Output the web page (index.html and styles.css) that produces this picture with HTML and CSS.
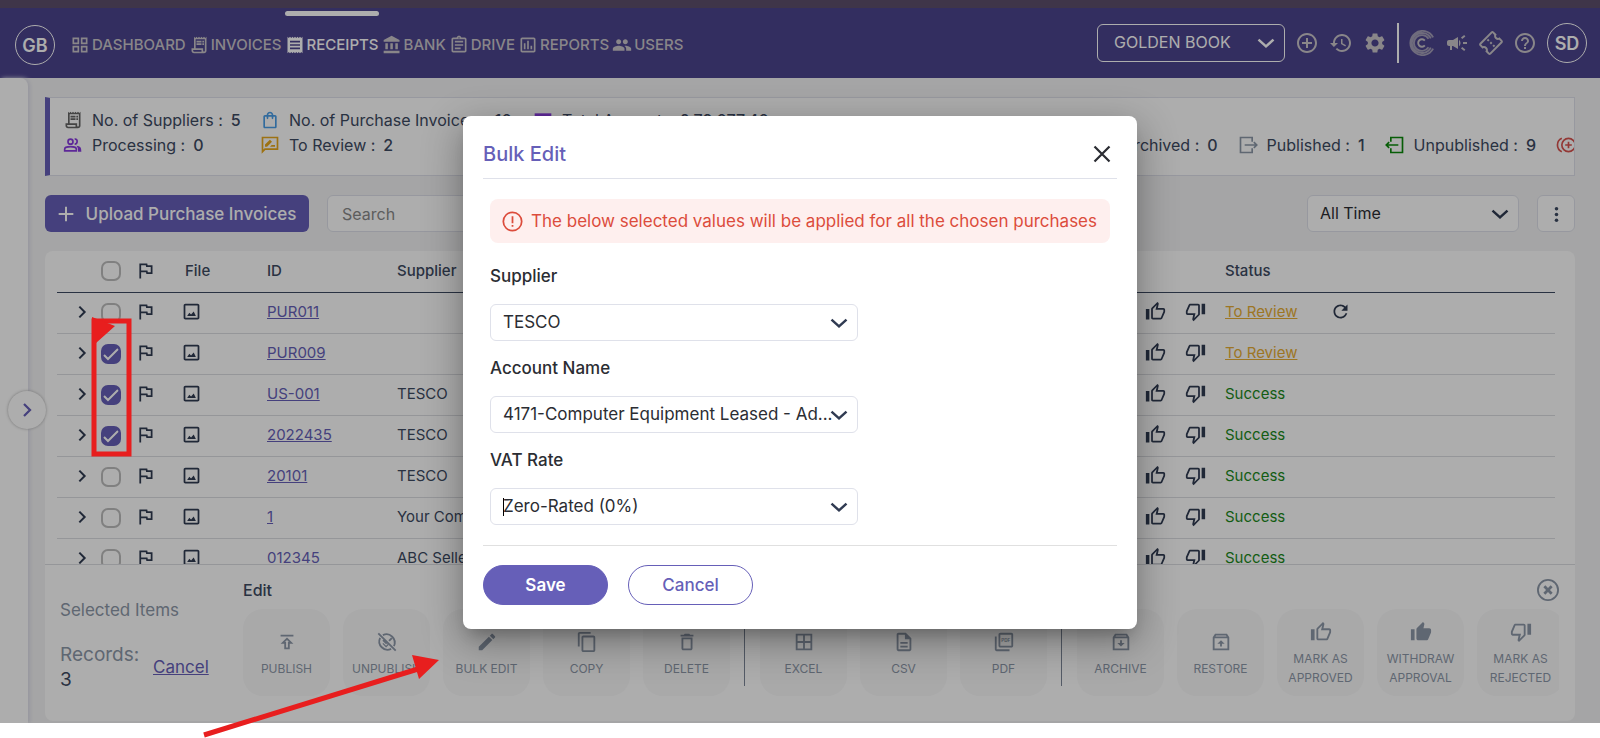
FILE: index.html
```html
<!DOCTYPE html>
<html lang="en">
<head>
    <meta charset="UTF-8">
    <meta name="viewport" content="width=device-width, initial-scale=1.0">
    <title>Receipts - Bulk Edit</title>
    <link rel="stylesheet" href="styles.css">
</head>
<body>
    <!-- Icon set -->
    <svg class="sprite" aria-hidden="true">
        <symbol id="grid" viewBox="0 0 24 24"><path d="M3 3v8h8V3H3zm6 6H5V5h4v4zm-6 4v8h8v-8H3zm6 6H5v-4h4v4zm4-16v8h8V3h-8zm6 6h-4V5h4v4zm-6 4v8h8v-8h-8zm6 6h-4v-4h4v4z"/></symbol>
        <symbol id="receipt-long" viewBox="0 0 24 24"><path d="M19.500 3.500 18 2l-1.500 1.500L15 2l-1.500 1.500L12 2l-1.500 1.500L9 2 7.500 3.500 6 2v14H3v3c0 1.660 1.340 3 3 3h12c1.660 0 3-1.340 3-3V2l-1.500 1.500zM15 20H6c-.55 0-1-.45-1-1v-1h10v2zm4-1c0 .55-.45 1-1 1s-1-.45-1-1v-3H8V5h11v14zM9 7h6v2H9zM16 7h2v2h-2zM9 10h6v2H9zM16 10h2v2h-2z"/></symbol>
        <symbol id="receipt" viewBox="0 0 24 24"><path d="M18 17H6v-2h12v2zm0-4H6v-2h12v2zm0-4H6V7h12v2zM3 22l1.500-1.500L6 22l1.500-1.500L9 22l1.500-1.500L12 22l1.500-1.500L15 22l1.500-1.500L18 22l1.500-1.500L21 22V2l-1.500 1.500L18 2l-1.500 1.500L15 2l-1.500 1.500L12 2l-1.500 1.500L9 2 7.500 3.500 6 2 4.500 3.500 3 2v20z"/></symbol>
        <symbol id="bank" viewBox="0 0 24 24"><path d="M4 10v7h3v-7H4zm6 0v7h3v-7h-3zM2 22h19v-3H2v3zm14-12v7h3v-7h-3zM11.500 1 2 6v2h19V6l-9.500-5z"/></symbol>
        <symbol id="drive" viewBox="0 0 24 24"><path d="M7 15h7v2H7zm0-4h10v2H7zm0-4h10v2H7zM19 3h-4.180C14.400 1.840 13.300 1 12 1s-2.400.84-2.820 2H5c-1.100 0-2 .9-2 2v14c0 1.100.9 2 2 2h14c1.100 0 2-.9 2-2V5c0-1.100-.9-2-2-2zm-7-.25c.41 0 .75.34.75.75s-.34.75-.75.75-.75-.34-.75-.75.34-.75.75-.75zM19 19H5V5h14v14z"/></symbol>
        <symbol id="reports" viewBox="0 0 24 24"><path d="M19 3H5c-1.100 0-2 .9-2 2v14c0 1.100.9 2 2 2h14c1.100 0 2-.9 2-2V5c0-1.100-.9-2-2-2zm0 16H5V5h14v14zM7 10h2v7H7zm4-3h2v10h-2zm4 6h2v4h-2z"/></symbol>
        <symbol id="users" viewBox="0 0 24 24"><path d="M16 11c1.660 0 3-1.340 3-3s-1.340-3-3-3-3 1.340-3 3 1.340 3 3 3zm-8 0c1.660 0 3-1.340 3-3S9.660 5 8 5 5 6.340 5 8s1.340 3 3 3zm0 2c-2.330 0-7 1.170-7 3.500V19h14v-2.500c0-2.330-4.670-3.500-7-3.500zm8 0c-.29 0-.62.02-.97.05 1.160.84 1.970 1.970 1.970 3.450V19h6v-2.500c0-2.330-4.670-3.500-7-3.500z"/></symbol>
        <symbol id="add-circle" viewBox="0 0 24 24"><path d="M13 7h-2v4H7v2h4v4h2v-4h4v-2h-4V7zm-1-5C6.480 2 2 6.480 2 12s4.480 10 10 10 10-4.480 10-10S17.520 2 12 2zm0 18c-4.410 0-8-3.590-8-8s3.590-8 8-8 8 3.590 8 8-3.590 8-8 8z"/></symbol>
        <symbol id="history" viewBox="0 0 24 24"><path d="M13 3c-4.970 0-9 4.030-9 9H1l3.890 3.890.07.14L9 12H6c0-3.870 3.130-7 7-7s7 3.130 7 7-3.130 7-7 7c-1.930 0-3.680-.79-4.940-2.060l-1.420 1.420C8.270 19.990 10.510 21 13 21c4.970 0 9-4.030 9-9s-4.030-9-9-9zm-1 5v5l4.280 2.540.72-1.210-3.500-2.080V8H12z"/></symbol>
        <symbol id="settings" viewBox="0 0 24 24"><path d="M19.140 12.940c.04-.3.06-.61.06-.94 0-.32-.02-.64-.07-.94l2.030-1.580c.18-.14.23-.41.12-.61l-1.920-3.320c-.12-.22-.37-.29-.59-.22l-2.390.96c-.5-.38-1.030-.7-1.620-.94l-.36-2.540c-.04-.24-.24-.41-.48-.41h-3.840c-.24 0-.43.17-.47.41l-.36 2.540c-.59.24-1.130.57-1.620.94l-2.390-.96c-.22-.08-.47 0-.59.22L2.740 8.870c-.12.21-.08.47.12.61l2.030 1.580c-.05.3-.09.63-.09.94s.02.64.07.94l-2.030 1.580c-.18.14-.23.41-.12.61l1.920 3.320c.12.22.37.29.59.22l2.390-.96c.5.38 1.030.7 1.620.94l.36 2.540c.05.24.24.41.48.41h3.840c.24 0 .44-.17.47-.41l.36-2.540c.59-.24 1.130-.56 1.620-.94l2.390.96c.22.08.47 0 .59-.22l1.920-3.320c.12-.22.07-.47-.12-.61l-2.010-1.580zM12 15.600c-1.980 0-3.600-1.620-3.600-3.600s1.620-3.600 3.600-3.600 3.600 1.620 3.600 3.600-1.620 3.600-3.600 3.600z"/></symbol>
        <symbol id="campaign" viewBox="0 0 24 24"><path d="M18 11v2h4v-2h-4zM16 17.610c.96.71 2.210 1.650 3.200 2.390.4-.53.8-1.070 1.200-1.600-.99-.74-2.240-1.680-3.200-2.400-.4.54-.8 1.080-1.200 1.610zM20.400 5.600c-.4-.53-.8-1.070-1.200-1.600-.99.74-2.240 1.680-3.200 2.400.4.53.8 1.070 1.200 1.600.96-.72 2.210-1.650 3.200-2.400zM4 9c-1.100 0-2 .9-2 2v2c0 1.100.9 2 2 2h1v4h2v-4h1l5 3V6L8 9H4zm11.500 3c0-1.330-.58-2.530-1.500-3.350v6.690c.92-.81 1.500-2.010 1.500-3.340z"/></symbol>
        <symbol id="ticket" viewBox="0 0 24 24"><path transform="rotate(-45 12 12)" d="M22 10V6c0-1.110-.9-2-2-2H4c-1.100 0-1.990.89-1.990 2v4c1.100 0 1.990.9 1.990 2s-.89 2-2 2v4c0 1.100.9 2 2 2h16c1.100 0 2-.9 2-2v-4c-1.100 0-2-.9-2-2s.9-2 2-2zm-2-1.460c-1.190.69-2 1.990-2 3.460s.81 2.770 2 3.460V18H4v-2.540c1.190-.69 2-1.990 2-3.460 0-1.480-.8-2.770-1.990-3.460L4 6h16v2.540zM11 15h2v2h-2zm0-4h2v2h-2zm0-4h2v2h-2z"/></symbol>
        <symbol id="help" viewBox="0 0 24 24"><path d="M11 18h2v-2h-2v2zm1-16C6.480 2 2 6.480 2 12s4.480 10 10 10 10-4.480 10-10S17.520 2 12 2zm0 18c-4.410 0-8-3.590-8-8s3.590-8 8-8 8 3.590 8 8-3.590 8-8 8zm0-14c-2.210 0-4 1.790-4 4h2c0-1.100.9-2 2-2s2 .9 2 2c0 2-3 1.750-3 5h2c0-2.250 3-2.500 3-5 0-2.210-1.790-4-4-4z"/></symbol>
        <symbol id="down" viewBox="0 0 24 24"><path class="line wide" d="M3 8l9 8 9-8"/></symbol>
        <symbol id="right" viewBox="0 0 24 24"><path class="line wide" d="M8 4l8 8-8 8"/></symbol>
        <symbol id="bag" viewBox="0 0 24 24"><path d="M18 6h-2c0-2.210-1.790-4-4-4S8 3.790 8 6H6c-1.100 0-2 .9-2 2v12c0 1.100.9 2 2 2h12c1.100 0 2-.9 2-2V8c0-1.100-.9-2-2-2zm-6-2c1.100 0 2 .9 2 2h-4c0-1.100.9-2 2-2zm6 16H6V8h2v2c0 .55.45 1 1 1s1-.45 1-1V8h4v2c0 .55.45 1 1 1s1-.45 1-1V8h2v12z"/></symbol>
        <symbol id="card" viewBox="0 0 24 24"><path d="M2 4h20v16H2z"/></symbol>
        <symbol id="people" viewBox="0 0 24 24"><circle class="line" cx="9" cy="8" r="3"/><path class="line" d="M2 19v-2c0-4 14-4 14 0v2zM14 5c4-1 4 6 0 6"/><path d="M16 13c5 .5 6 2 6 7h-4c0-3 0-5-2-7z"/></symbol>
        <symbol id="review" viewBox="0 0 24 24"><path class="line" d="M3 3h18v14H6l-3 3z"/><path d="M6 14v-2.500l5.900-5.900 2.500 2.500L8.500 14zM12 14l2-2h4v2z"/></symbol>
        <symbol id="export" viewBox="0 0 24 24"><path class="line" d="M17 8V3H3v18h14v-5M8 12h14M19 8.500l3.500 3.500-3.500 3.500"/></symbol>
        <symbol id="import" viewBox="0 0 24 24"><path class="line" d="M7 8V3h14v18H7v-5M16 12H2M5 8.500L1.500 12 5 15.500"/></symbol>
        <symbol id="duplicate" viewBox="0 0 24 24"><circle class="line" cx="15" cy="12" r="8"/><path class="line" d="M15 8v8M11 12h8M7 4c-7 3-7 13 0 16"/></symbol>
        <symbol id="plus" viewBox="0 0 24 24"><path class="line wide" d="M12 1v22M1 12h22"/></symbol>
        <symbol id="dots" viewBox="0 0 24 24"><circle cx="12" cy="4" r="2.500"/><circle cx="12" cy="12" r="2.500"/><circle cx="12" cy="20" r="2.500"/></symbol>
        <symbol id="flag" viewBox="0 0 24 24"><path d="M12.360 6l.4 2H18v6h-3.360l-.4-2H7V6h5.360M14 4H5v17h2v-7h5.600l.4 2h7V6h-5.600L14 4z"/></symbol>
        <symbol id="image" viewBox="0 0 24 24"><path d="M19 5v14H5V5h14m0-2H5c-1.100 0-2 .9-2 2v14c0 1.100.9 2 2 2h14c1.100 0 2-.9 2-2V5c0-1.100-.9-2-2-2zM7 17l2.500-3.500 2 2 3-3.500 2.500 5z"/></symbol>
        <symbol id="thumb-up" viewBox="0 0 24 24"><path d="M9 21h9c.83 0 1.540-.5 1.840-1.220l3.020-7.050c.09-.23.14-.47.14-.73v-2c0-1.100-.9-2-2-2h-6.310l.95-4.570.03-.32c0-.41-.17-.79-.44-1.060L14.170 1 7.580 7.590C7.220 7.950 7 8.450 7 9v10c0 1.100.9 2 2 2zM9 9l4.340-4.340L12 10h9v2l-3 7H9V9zM1 9h4v12H1z"/></symbol>
        <symbol id="thumb-full" viewBox="0 0 24 24"><path d="M1 21h4V9H1v12zm22-11c0-1.100-.9-2-2-2h-6.310l.95-4.570.03-.32c0-.41-.17-.79-.44-1.060L14.170 1 7.590 7.590C7.220 7.950 7 8.450 7 9v10c0 1.100.9 2 2 2h9c.83 0 1.540-.5 1.840-1.220l3.020-7.050c.09-.23.14-.47.14-.73v-2z"/></symbol>
        <symbol id="thumb-down" viewBox="0 0 24 24"><path transform="rotate(180 12 12)" d="M9 21h9c.83 0 1.540-.5 1.840-1.220l3.020-7.050c.09-.23.14-.47.14-.73v-2c0-1.100-.9-2-2-2h-6.310l.95-4.570.03-.32c0-.41-.17-.79-.44-1.060L14.170 1 7.580 7.590C7.220 7.950 7 8.450 7 9v10c0 1.100.9 2 2 2zM9 9l4.340-4.340L12 10h9v2l-3 7H9V9zM1 9h4v12H1z"/></symbol>
        <symbol id="refresh" viewBox="0 0 24 24"><path d="M17.650 6.350C16.200 4.900 14.210 4 12 4c-4.420 0-7.990 3.580-7.990 8s3.570 8 7.990 8c3.730 0 6.840-2.550 7.730-6h-2.080c-.82 2.330-3.040 4-5.650 4-3.310 0-6-2.690-6-6s2.690-6 6-6c1.660 0 3.140.69 4.220 1.780L13 11h7V4l-2.350 2.350z"/></symbol>
        <symbol id="publish" viewBox="0 0 24 24"><path d="M5 4h14v2H5zM5 14h4v6h6v-6h4l-7-7-7 7zm8-2v6h-2v-6H9.830L12 9.830 14.170 12H13z"/></symbol>
        <symbol id="unpublish" viewBox="0 0 24 24"><path class="line" d="M7.500 4.500a9 9 0 0 1 12 12M16.500 19.500a9 9 0 0 1-12-12M2.500 2.500l19 19"/><path d="M7 10.500l4 4 1.500-1.500-4-4zM13.500 10l3-3L18 8.500l-3 3zM11 16l2-2 1 1-3 3-4-4 1-1z"/></symbol>
        <symbol id="edit" viewBox="0 0 24 24"><path d="M3 17.250V21h3.750L17.810 9.940l-3.750-3.750L3 17.250zM20.710 7.040c.39-.39.39-1.020 0-1.410l-2.340-2.340c-.39-.39-1.020-.39-1.410 0l-1.830 1.830 3.750 3.750 1.830-1.830z"/></symbol>
        <symbol id="copy" viewBox="0 0 24 24"><path d="M16 1H4c-1.100 0-2 .9-2 2v14h2V3h12V1zm3 4H8c-1.100 0-2 .9-2 2v14c0 1.100.9 2 2 2h11c1.100 0 2-.9 2-2V7c0-1.100-.9-2-2-2zm0 16H8V7h11v14z"/></symbol>
        <symbol id="delete" viewBox="0 0 24 24"><path d="M6 19c0 1.100.9 2 2 2h8c1.100 0 2-.9 2-2V7H6v12zM8 9h8v10H8V9zm7.500-5l-1-1h-5l-1 1H5v2h14V4z"/></symbol>
        <symbol id="excel" viewBox="0 0 24 24"><path d="M3 3v18h18V3H3zm8 16H5v-6h6v6zm0-8H5V5h6v6zm8 8h-6v-6h6v6zm0-8h-6V5h6v6z"/></symbol>
        <symbol id="csv" viewBox="0 0 24 24"><path d="M8 16h8v2H8zm0-4h8v2H8zm6-10H6c-1.100 0-2 .9-2 2v16c0 1.100.89 2 1.990 2H18c1.100 0 2-.9 2-2V8l-6-6zm4 18H6V4h7v5h5v11z"/></symbol>
        <symbol id="pdf" viewBox="0 0 24 24"><path d="M20 2H8c-1.100 0-2 .9-2 2v12c0 1.100.9 2 2 2h12c1.100 0 2-.9 2-2V4c0-1.100-.9-2-2-2zm0 14H8V4h12v12zM4 6H2v14c0 1.100.9 2 2 2h14v-2H4V6z"/><text class="icon-text" x="14" y="12" text-anchor="middle">PDF</text></symbol>
        <symbol id="archive" viewBox="0 0 24 24"><path class="line" d="M4 7l2-3h12l2 3v13H4zM4 7h16"/><path d="M11 10h2v3h3l-4 4-4-4h3z"/></symbol>
        <symbol id="restore" viewBox="0 0 24 24"><path class="line" d="M4 7l2-3h12l2 3v13H4zM4 7h16"/><path d="M11 17h2v-3h3l-4-4-4 4h3z"/></symbol>
        <symbol id="close" viewBox="0 0 24 24"><path class="line wide" d="M2 2l20 20M22 2L2 22"/></symbol>
        <symbol id="close-circle" viewBox="0 0 24 24"><circle class="line" cx="12" cy="12" r="11"/><path class="line wide" d="M8 8l8 8M16 8l-8 8"/></symbol>
        <symbol id="alert" viewBox="0 0 24 24"><circle class="line" cx="12" cy="12" r="10.500"/><path class="line" d="M12 6v8M12 16v2"/></symbol>
        <symbol id="rings" viewBox="0 0 28 28"><path class="line thin" d="M26 8a13 13 0 1 0 0 12M23.500 9a10.800 10.800 0 1 0 0 10M21 9.500a8.500 8.500 0 1 0 0 9"/><path class="line" d="M17 11.500a4 4 0 1 0 0 5"/></symbol>
    </svg>

    <div class="app">
        <header class="header">
            <a href="#" class="avatar logo">GB</a>
            <nav class="nav">
                <a href="#"><svg><use href="#grid"/></svg>DASHBOARD</a>
                <a href="#"><svg><use href="#receipt-long"/></svg>INVOICES</a>
                <a href="#" class="active"><svg><use href="#receipt"/></svg>RECEIPTS</a>
                <a href="#"><svg><use href="#bank"/></svg>BANK</a>
                <a href="#"><svg><use href="#drive"/></svg>DRIVE</a>
                <a href="#"><svg><use href="#reports"/></svg>REPORTS</a>
                <a href="#"><svg><use href="#users"/></svg>USERS</a>
            </nav>
            <div class="header-tools">
                <div class="select company">
                    <select aria-label="Company"><option>GOLDEN BOOK</option></select>
                    <svg><use href="#down"/></svg>
                </div>
                <button class="tool" aria-label="Add"><svg><use href="#add-circle"/></svg></button>
                <button class="tool" aria-label="History"><svg><use href="#history"/></svg></button>
                <button class="tool" aria-label="Settings"><svg><use href="#settings"/></svg></button>
                <span class="header-line"></span>
                <button class="tool rings" aria-label="Credits"><svg><use href="#rings"/></svg></button>
                <button class="tool" aria-label="News"><svg><use href="#campaign"/></svg></button>
                <button class="tool" aria-label="Tickets"><svg><use href="#ticket"/></svg></button>
                <button class="tool" aria-label="Help"><svg><use href="#help"/></svg></button>
                <button class="avatar">SD</button>
            </div>
        </header>

        <div class="body">
            <aside class="sidebar">
                <button class="toggle" aria-label="Open sidebar"><svg><use href="#right"/></svg></button>
            </aside>

            <main class="main">
                <section class="summary">
                    <div class="summary-row">
                        <span class="stat first"><svg class="gray"><use href="#receipt-long"/></svg>No. of Suppliers : <b>5</b></span>
                        <span class="stat second"><svg class="blue"><use href="#bag"/></svg>No. of Purchase Invoices : <b>10</b></span>
                        <span class="stat"><svg class="purple"><use href="#card"/></svg>Total Amount : <b>£ 79,077.40</b></span>
                    </div>
                    <div class="summary-row">
                        <span class="stat first"><svg class="purple"><use href="#people"/></svg>Processing : <b>0</b></span>
                        <span class="stat second"><svg class="yellow"><use href="#review"/></svg>To Review : <b>2</b></span>
                        <div class="stats-end">
                            <span class="stat">Archived : <b>0</b></span>
                            <span class="stat"><svg class="slate"><use href="#export"/></svg>Published : <b>1</b></span>
                            <span class="stat"><svg class="green"><use href="#import"/></svg>Unpublished : <b>9</b></span>
                            <svg class="red"><use href="#duplicate"/></svg>
                        </div>
                    </div>
                </section>

                <div class="toolbar">
                    <button class="upload"><svg><use href="#plus"/></svg>Upload Purchase Invoices</button>
                    <input class="search" type="text" placeholder="Search" aria-label="Search">
                    <div class="select period">
                        <select aria-label="Period"><option>All Time</option></select>
                        <svg><use href="#down"/></svg>
                    </div>
                    <button class="more" aria-label="More"><svg><use href="#dots"/></svg></button>
                </div>

                <section class="card">
                    <div class="table-wrap">
                        <table>
                            <thead>
                                <tr>
                                    <th class="c-open"></th>
                                    <th class="c-check"><input type="checkbox" aria-label="Select all"></th>
                                    <th class="c-flag"><svg><use href="#flag"/></svg></th>
                                    <th class="c-file">File</th>
                                    <th class="c-id">ID</th>
                                    <th>Supplier</th>
                                    <th class="c-thumb"></th>
                                    <th class="c-thumb"></th>
                                    <th class="c-status">Status</th>
                                    <th class="c-retry"></th>
                                </tr>
                            </thead>
                            <tbody>
                                <tr>
                                    <td><svg class="open"><use href="#right"/></svg></td>
                                    <td><input type="checkbox" aria-label="PUR011"></td>
                                    <td><svg><use href="#flag"/></svg></td>
                                    <td><svg><use href="#image"/></svg></td>
                                    <td><a href="#">PUR011</a></td>
                                    <td></td>
                                    <td><svg><use href="#thumb-up"/></svg></td>
                                    <td><svg><use href="#thumb-down"/></svg></td>
                                    <td><a href="#" class="review">To Review</a></td>
                                    <td><svg><use href="#refresh"/></svg></td>
                                </tr>
                                <tr>
                                    <td><svg class="open"><use href="#right"/></svg></td>
                                    <td><input type="checkbox" aria-label="PUR009" checked></td>
                                    <td><svg><use href="#flag"/></svg></td>
                                    <td><svg><use href="#image"/></svg></td>
                                    <td><a href="#">PUR009</a></td>
                                    <td></td>
                                    <td><svg><use href="#thumb-up"/></svg></td>
                                    <td><svg><use href="#thumb-down"/></svg></td>
                                    <td><a href="#" class="review">To Review</a></td>
                                    <td></td>
                                </tr>
                                <tr>
                                    <td><svg class="open"><use href="#right"/></svg></td>
                                    <td><input type="checkbox" aria-label="US-001" checked></td>
                                    <td><svg><use href="#flag"/></svg></td>
                                    <td><svg><use href="#image"/></svg></td>
                                    <td><a href="#">US-001</a></td>
                                    <td>TESCO</td>
                                    <td><svg><use href="#thumb-up"/></svg></td>
                                    <td><svg><use href="#thumb-down"/></svg></td>
                                    <td class="success">Success</td>
                                    <td></td>
                                </tr>
                                <tr>
                                    <td><svg class="open"><use href="#right"/></svg></td>
                                    <td><input type="checkbox" aria-label="2022435" checked></td>
                                    <td><svg><use href="#flag"/></svg></td>
                                    <td><svg><use href="#image"/></svg></td>
                                    <td><a href="#">2022435</a></td>
                                    <td>TESCO</td>
                                    <td><svg><use href="#thumb-up"/></svg></td>
                                    <td><svg><use href="#thumb-down"/></svg></td>
                                    <td class="success">Success</td>
                                    <td></td>
                                </tr>
                                <tr>
                                    <td><svg class="open"><use href="#right"/></svg></td>
                                    <td><input type="checkbox" aria-label="20101"></td>
                                    <td><svg><use href="#flag"/></svg></td>
                                    <td><svg><use href="#image"/></svg></td>
                                    <td><a href="#">20101</a></td>
                                    <td>TESCO</td>
                                    <td><svg><use href="#thumb-up"/></svg></td>
                                    <td><svg><use href="#thumb-down"/></svg></td>
                                    <td class="success">Success</td>
                                    <td></td>
                                </tr>
                                <tr>
                                    <td><svg class="open"><use href="#right"/></svg></td>
                                    <td><input type="checkbox" aria-label="1"></td>
                                    <td><svg><use href="#flag"/></svg></td>
                                    <td><svg><use href="#image"/></svg></td>
                                    <td><a href="#">1</a></td>
                                    <td>Your Company</td>
                                    <td><svg><use href="#thumb-up"/></svg></td>
                                    <td><svg><use href="#thumb-down"/></svg></td>
                                    <td class="success">Success</td>
                                    <td></td>
                                </tr>
                                <tr>
                                    <td><svg class="open"><use href="#right"/></svg></td>
                                    <td><input type="checkbox" aria-label="012345"></td>
                                    <td><svg><use href="#flag"/></svg></td>
                                    <td><svg><use href="#image"/></svg></td>
                                    <td><a href="#">012345</a></td>
                                    <td>ABC Seller</td>
                                    <td><svg><use href="#thumb-up"/></svg></td>
                                    <td><svg><use href="#thumb-down"/></svg></td>
                                    <td class="success">Success</td>
                                    <td></td>
                                </tr>
                            </tbody>
                        </table>
                    </div>

                    <div class="bulk">
                        <div class="selected">
                            <p class="selected-title">Selected Items</p>
                            <div class="records">
                                <p>Records: <span>3</span></p>
                                <a href="#">Cancel</a>
                            </div>
                        </div>
                        <div class="groups">
                            <div class="group">
                                <h3>Edit</h3>
                                <div class="tiles">
                                    <button><svg><use href="#publish"/></svg>PUBLISH</button>
                                    <button><svg><use href="#unpublish"/></svg>UNPUBLISH</button>
                                    <button><svg><use href="#edit"/></svg>BULK EDIT</button>
                                    <button><svg><use href="#copy"/></svg>COPY</button>
                                    <button><svg><use href="#delete"/></svg>DELETE</button>
                                </div>
                            </div>
                            <div class="group">
                                <div class="tiles">
                                    <button><svg><use href="#excel"/></svg>EXCEL</button>
                                    <button><svg><use href="#csv"/></svg>CSV</button>
                                    <button><svg><use href="#pdf"/></svg>PDF</button>
                                </div>
                            </div>
                            <div class="group">
                                <h3>Actions</h3>
                                <div class="tiles">
                                    <button><svg><use href="#archive"/></svg>ARCHIVE</button>
                                    <button><svg><use href="#restore"/></svg>RESTORE</button>
                                    <button><svg><use href="#thumb-up"/></svg>MARK AS APPROVED</button>
                                    <button><svg><use href="#thumb-full"/></svg>WITHDRAW APPROVAL</button>
                                    <button><svg><use href="#thumb-down"/></svg>MARK AS REJECTED</button>
                                </div>
                            </div>
                        </div>
                        <button class="bulk-close" aria-label="Close"><svg><use href="#close-circle"/></svg></button>
                    </div>
                </section>
            </main>
        </div>

        <!-- Bulk edit dialog -->
        <div class="backdrop">
            <div class="modal" role="dialog" aria-labelledby="modal-title">
                <div class="modal-head">
                    <h2 id="modal-title">Bulk Edit</h2>
                    <button class="modal-close" aria-label="Close"><svg><use href="#close"/></svg></button>
                </div>
                <div class="modal-body">
                    <p class="notice"><svg><use href="#alert"/></svg>The below selected values will be applied for all the chosen purchases</p>
                    <div class="field">
                        <label for="supplier">Supplier</label>
                        <div class="select">
                            <select id="supplier"><option>TESCO</option></select>
                            <svg><use href="#down"/></svg>
                        </div>
                    </div>
                    <div class="field">
                        <label for="account">Account Name</label>
                        <div class="select">
                            <select id="account"><option>4171-Computer Equipment Leased - Ad...</option></select>
                            <svg><use href="#down"/></svg>
                        </div>
                    </div>
                    <div class="field">
                        <label for="vat">VAT Rate</label>
                        <div class="select focused">
                            <select id="vat"><option>Zero-Rated (0%)</option></select>
                            <svg><use href="#down"/></svg>
                        </div>
                    </div>
                </div>
                <div class="modal-foot">
                    <button class="save">Save</button>
                    <button class="cancel">Cancel</button>
                </div>
            </div>
        </div>
    </div>

    <!-- Red markers over the page -->
    <svg class="markers" viewBox="0 0 460 738" aria-hidden="true">
        <path class="marker-line" d="M94 321h35v133H94z"/>
        <path class="marker-line" d="M204 735L418 669"/>
        <path class="marker-fill" d="M92 317l23 9-19 17h-4zM412 655l27 5-20 19z"/>
    </svg>
</body>
</html>
```

FILE: styles.css
```css
* {
    box-sizing: border-box;
}
body {
    margin: 0;
    background-color: white;
    color: #3d4a62;
    font-family: Inter, "Open Sans", sans-serif;
    font-size: 16px;
    overflow: hidden;
}
button, input, select {
    font-family: inherit;
    font-size: inherit;
    color: inherit;
}
button {
    border: none;
    background: none;
    padding: 0;
    cursor: pointer;
}
p, h2, h3 {
    margin: 0;
}
svg {
    width: 20px;
    height: 20px;
    fill: currentColor;
    flex-shrink: 0;
}
.sprite {
    position: absolute;
    width: 0;
    height: 0;
}
.line {
    fill: none;
    stroke: currentColor;
    stroke-width: 2;
}
.wide {
    stroke-width: 3;
}
.icon-text {
    font-size: 5px;
    font-weight: 700;
}
.app {
    position: relative;
    height: calc(100vh - 15px);
    display: flex;
    flex-direction: column;
    background-color: #f4f4f5;
}

/* Header */
.header {
    height: 78px;
    flex-shrink: 0;
    border-top: 8px solid #5d4f6c;
    padding: 0 13px 0 15px;
    display: flex;
    align-items: center;
    background-color: #4c448e;
    color: #cac6cb;
}
.avatar {
    width: 40px;
    height: 40px;
    border: 1px solid white;
    border-radius: 50%;
    display: flex;
    align-items: center;
    justify-content: center;
    color: white;
    font-size: 18px;
    font-weight: 600;
    text-decoration: none;
}
.avatar.logo {
    margin-top: 4px;
}
.nav {
    align-self: stretch;
    display: flex;
    gap: 3px;
    margin-left: 15px;
}
.nav a {
    display: flex;
    align-items: center;
    gap: 2px;
    border-top: 3px solid transparent;
    color: inherit;
    text-decoration: none;
    font-size: 15px;
    font-weight: 500;
}
.nav .active {
    position: relative;
    color: white;
}
.nav .active::before {
    content: "";
    position: absolute;
    top: 0;
    left: 0;
    right: 0;
    height: 5px;
    border-radius: 3px;
    background-color: white;
}
.header-tools {
    margin-left: auto;
    display: flex;
    align-items: center;
    gap: 10px;
}
.tool svg {
    display: block;
    width: 24px;
    height: 24px;
}
.tool.rings svg {
    width: 26px;
    height: 26px;
}
.thin {
    stroke-width: 2;
    opacity: 0.7;
}
.header-line {
    width: 2px;
    height: 40px;
    background-color: white;
}

/* Drop-downs */
.select {
    position: relative;
    height: 38px;
}
.select select {
    appearance: none;
    width: 100%;
    height: 100%;
    padding: 0 24px 2px 12px;
    border: 1px solid #dfe1ea;
    border-radius: 6px;
    background-color: white;
    color: #2b2d33;
}
.select svg {
    position: absolute;
    right: 9px;
    top: 9px;
    color: #303b52;
    pointer-events: none;
}
.select.company {
    width: 188px;
}
.select.company select {
    padding-left: 16px;
    border-color: white;
    background-color: transparent;
    color: white;
    font-size: 16px;
}
.select.company svg {
    color: white;
}
.select.period {
    width: 212px;
    margin-left: auto;
}

/* Page body */
.body {
    flex: 1;
    min-height: 0;
    display: flex;
}
.sidebar {
    position: relative;
    width: 28px;
    flex-shrink: 0;
    border-top-right-radius: 8px;
    background-color: white;
    box-shadow: 2px 0 4px #dcdce8;
}
.toggle {
    position: absolute;
    top: 313px;
    left: 8px;
    width: 38px;
    height: 38px;
    border-radius: 50%;
    background-color: white;
    box-shadow: 0 0 3px #aaa;
    display: flex;
    align-items: center;
    justify-content: center;
    color: #665fb8;
}
.toggle svg {
    width: 18px;
    height: 18px;
}
.main {
    flex: 1;
    min-width: 0;
    padding: 19px 25px 2px 17px;
    display: flex;
    flex-direction: column;
}
.summary {
    height: 79px;
    padding: 9px 0 0 13px;
    border: 1px solid #dfe1ea;
    border-left: 5px solid #665fb8;
    background-color: white;
    overflow: hidden;
}
.summary-row {
    display: flex;
    height: 25px;
}
.stat {
    display: flex;
    align-items: center;
    gap: 8px;
    white-space: nowrap;
}
.stat b {
    font-weight: 500;
}
.stat svg, .stats-end svg {
    margin-right: 1px;
}
.stat.first {
    width: 197px;
}
.stat.second {
    width: 273px;
}
.stats-end {
    display: flex;
    align-items: center;
    gap: 20px;
    margin-left: auto;
    margin-right: -3px;
}
.gray { color: #666; }
.blue { color: #4a9ee8; }
.purple { color: #8a3be0; }
.yellow { color: #e8a91c; }
.slate { color: #8d98a8; }
.green { color: #0a8a0a; }
.red { color: #d9534f; }

.toolbar {
    display: flex;
    margin: 19px 0;
}
.upload {
    height: 37px;
    width: 264px;
    border-radius: 6px;
    background-color: #665fb8;
    color: white;
    font-size: 17px;
    font-weight: 500;
    display: flex;
    align-items: center;
    justify-content: center;
    gap: 12px;
}
.upload svg {
    width: 16px;
    height: 16px;
}
.search {
    width: 320px;
    height: 37px;
    margin-left: 18px;
    padding: 0 14px;
    border: 1px solid #dfe1ea;
    border-radius: 6px;
    background-color: white;
}
.search::placeholder {
    color: #8a8a8a;
}
.toolbar .select {
    height: 37px;
}
.more {
    width: 38px;
    height: 37px;
    margin-left: 18px;
    border: 1px solid #dfe1ea;
    border-radius: 6px;
    background-color: white;
}
.more svg {
    width: 17px;
    height: 17px;
    margin-top: 6px;
}

/* Table */
.card {
    flex: 1;
    min-height: 0;
    display: flex;
    flex-direction: column;
    border-radius: 8px;
    background-color: white;
}
.table-wrap {
    flex: 1;
    min-height: 0;
    padding: 0 20px 0 12px;
    overflow: hidden;
}
table {
    width: 100%;
    table-layout: fixed;
    border-collapse: collapse;
    font-size: 15px;
}
th, td {
    height: 41px;
    padding: 0 0 2px;
    text-align: left;
    border-bottom: 1px solid #dcdde2;
    white-space: nowrap;
}
th {
    font-weight: 500;
    border-bottom-color: #3d4a62;
}
th svg, td svg {
    display: block;
    width: 21px;
    height: 21px;
    color: #303b52;
}
.c-open { width: 44px; }
.c-check { width: 34px; }
.c-flag { width: 46px; }
.c-file { width: 86px; }
.c-id { width: 130px; }
.c-thumb { width: 40px; }
.c-status { width: 105px; }
.c-retry { width: 225px; }
th.c-file {
    padding-left: 4px;
}
td .open {
    width: 16px;
    height: 16px;
    margin-left: 17px;
}
td a {
    color: #665fb8;
}
td .review {
    color: #e8ae35;
}
.success {
    color: #1c8a1c;
}
input[type="checkbox"] {
    appearance: none;
    display: block;
    width: 20px;
    height: 20px;
    margin: 2px 0 0;
    border: 2px solid #bdbdbd;
    border-radius: 7px;
}
input[type="checkbox"]:checked {
    border-color: #665fb8;
    background: #665fb8 url("data:image/svg+xml,%3Csvg xmlns='http://www.w3.org/2000/svg' viewBox='0 0 16 16'%3E%3Cpath d='M1 9l4 4L15 3' fill='none' stroke='white' stroke-width='2'/%3E%3C/svg%3E") center / 16px no-repeat;
}

/* Selected items bar */
.bulk {
    position: relative;
    height: 157px;
    flex-shrink: 0;
    display: flex;
    border-top: 1px solid #dcdde2;
    padding: 13px 16px 0 15px;
}
.selected {
    width: 183px;
    flex-shrink: 0;
    padding-top: 22px;
    color: #8d98a8;
}
.selected-title {
    font-size: 17px;
}
.records {
    display: flex;
    align-items: center;
    gap: 9px;
    margin-top: 22px;
}
.records p {
    width: 84px;
    font-size: 19px;
    line-height: 25px;
}
.records span {
    display: block;
    color: #3d4a62;
}
.records a {
    color: #665fb8;
    font-size: 17px;
}
.groups {
    flex: 1;
    min-width: 0;
    display: flex;
    align-items: flex-start;
    overflow: hidden;
}
.group {
    height: 118px;
    display: flex;
    flex-direction: column;
    justify-content: flex-end;
    position: relative;
}
.group h3 {
    font-size: 16px;
    line-height: 24px;
    font-weight: 500;
    margin-bottom: 7px;
}
.group + .group {
    margin-left: 30px;
}
.group + .group::before {
    content: "";
    position: absolute;
    left: -16px;
    bottom: 10px;
    width: 1px;
    height: 70px;
    background-color: #7d8799;
}
.tiles {
    display: flex;
    gap: 13px;
}
.tiles button {
    width: 87px;
    height: 87px;
    flex-shrink: 0;
    border-radius: 20px;
    background-color: #f9f9fa;
    color: #8d98a8;
    font-size: 12px;
    line-height: 19px;
    display: flex;
    flex-direction: column;
    align-items: center;
    justify-content: center;
    gap: 6px;
    padding-top: 3px;
}
.tiles svg {
    width: 22px;
    height: 22px;
}
.bulk-close {
    position: absolute;
    top: 14px;
    right: 16px;
    color: #8d98a8;
}
.bulk-close svg {
    display: block;
    width: 22px;
    height: 22px;
}

/* Dialog */
.backdrop {
    position: absolute;
    inset: 0;
    display: flex;
    justify-content: center;
    align-items: flex-start;
    padding-top: 116px;
    background-color: rgba(0, 0, 0, 0.32);
}
.modal {
    width: 674px;
    padding: 20px 20px 24px;
    border-radius: 8px;
    background-color: white;
    box-shadow: 0 11px 15px -7px rgba(0, 0, 0, 0.2), 0 12px 38px 3px rgba(0, 0, 0, 0.3);
    color: #2b2d33;
}
.modal-head {
    display: flex;
    justify-content: space-between;
    align-items: center;
    height: 43px;
    padding: 0 6px 7px 0;
    border-bottom: 1px solid #dfe1ea;
}
.modal-head h2 {
    font-size: 20px;
    font-weight: 500;
    color: #665fb8;
}
.modal-close svg {
    display: block;
    width: 18px;
    height: 18px;
}
.modal-body {
    padding: 20px 7px;
    font-size: 17px;
}
.notice {
    display: flex;
    align-items: center;
    gap: 8px;
    height: 44px;
    padding: 0 10px 0 12px;
    border-radius: 8px;
    background-color: #feefee;
    color: #dc4c3c;
    white-space: nowrap;
}
.notice svg {
    width: 21px;
    height: 21px;
}
.field {
    width: 368px;
    margin-top: 15px;
}
.notice + .field {
    margin-top: 21px;
}
.field label {
    display: block;
    margin-bottom: 16px;
    line-height: 24px;
    font-weight: 500;
}
.field .select {
    height: 37px;
}
.focused::before {
    content: "";
    position: absolute;
    left: 13px;
    top: 10px;
    width: 1px;
    height: 18px;
    background-color: black;
}
.modal-foot {
    display: flex;
    gap: 20px;
    padding-top: 19px;
    border-top: 1px solid #e0e0e0;
}
.modal-foot button {
    width: 125px;
    height: 40px;
    border: 1px solid #665fb8;
    border-radius: 20px;
    font-size: 17px;
    font-weight: 500;
    color: #665fb8;
}
.modal-foot .save {
    background-color: #665fb8;
    color: white;
    font-weight: 600;
}

/* Markers */
.markers {
    position: absolute;
    top: 0;
    left: 0;
    width: 460px;
    height: 738px;
    pointer-events: none;
}
.marker-line {
    fill: none;
    stroke: #e81e1e;
    stroke-width: 5;
}
.marker-fill {
    fill: #e81e1e;
}
```
